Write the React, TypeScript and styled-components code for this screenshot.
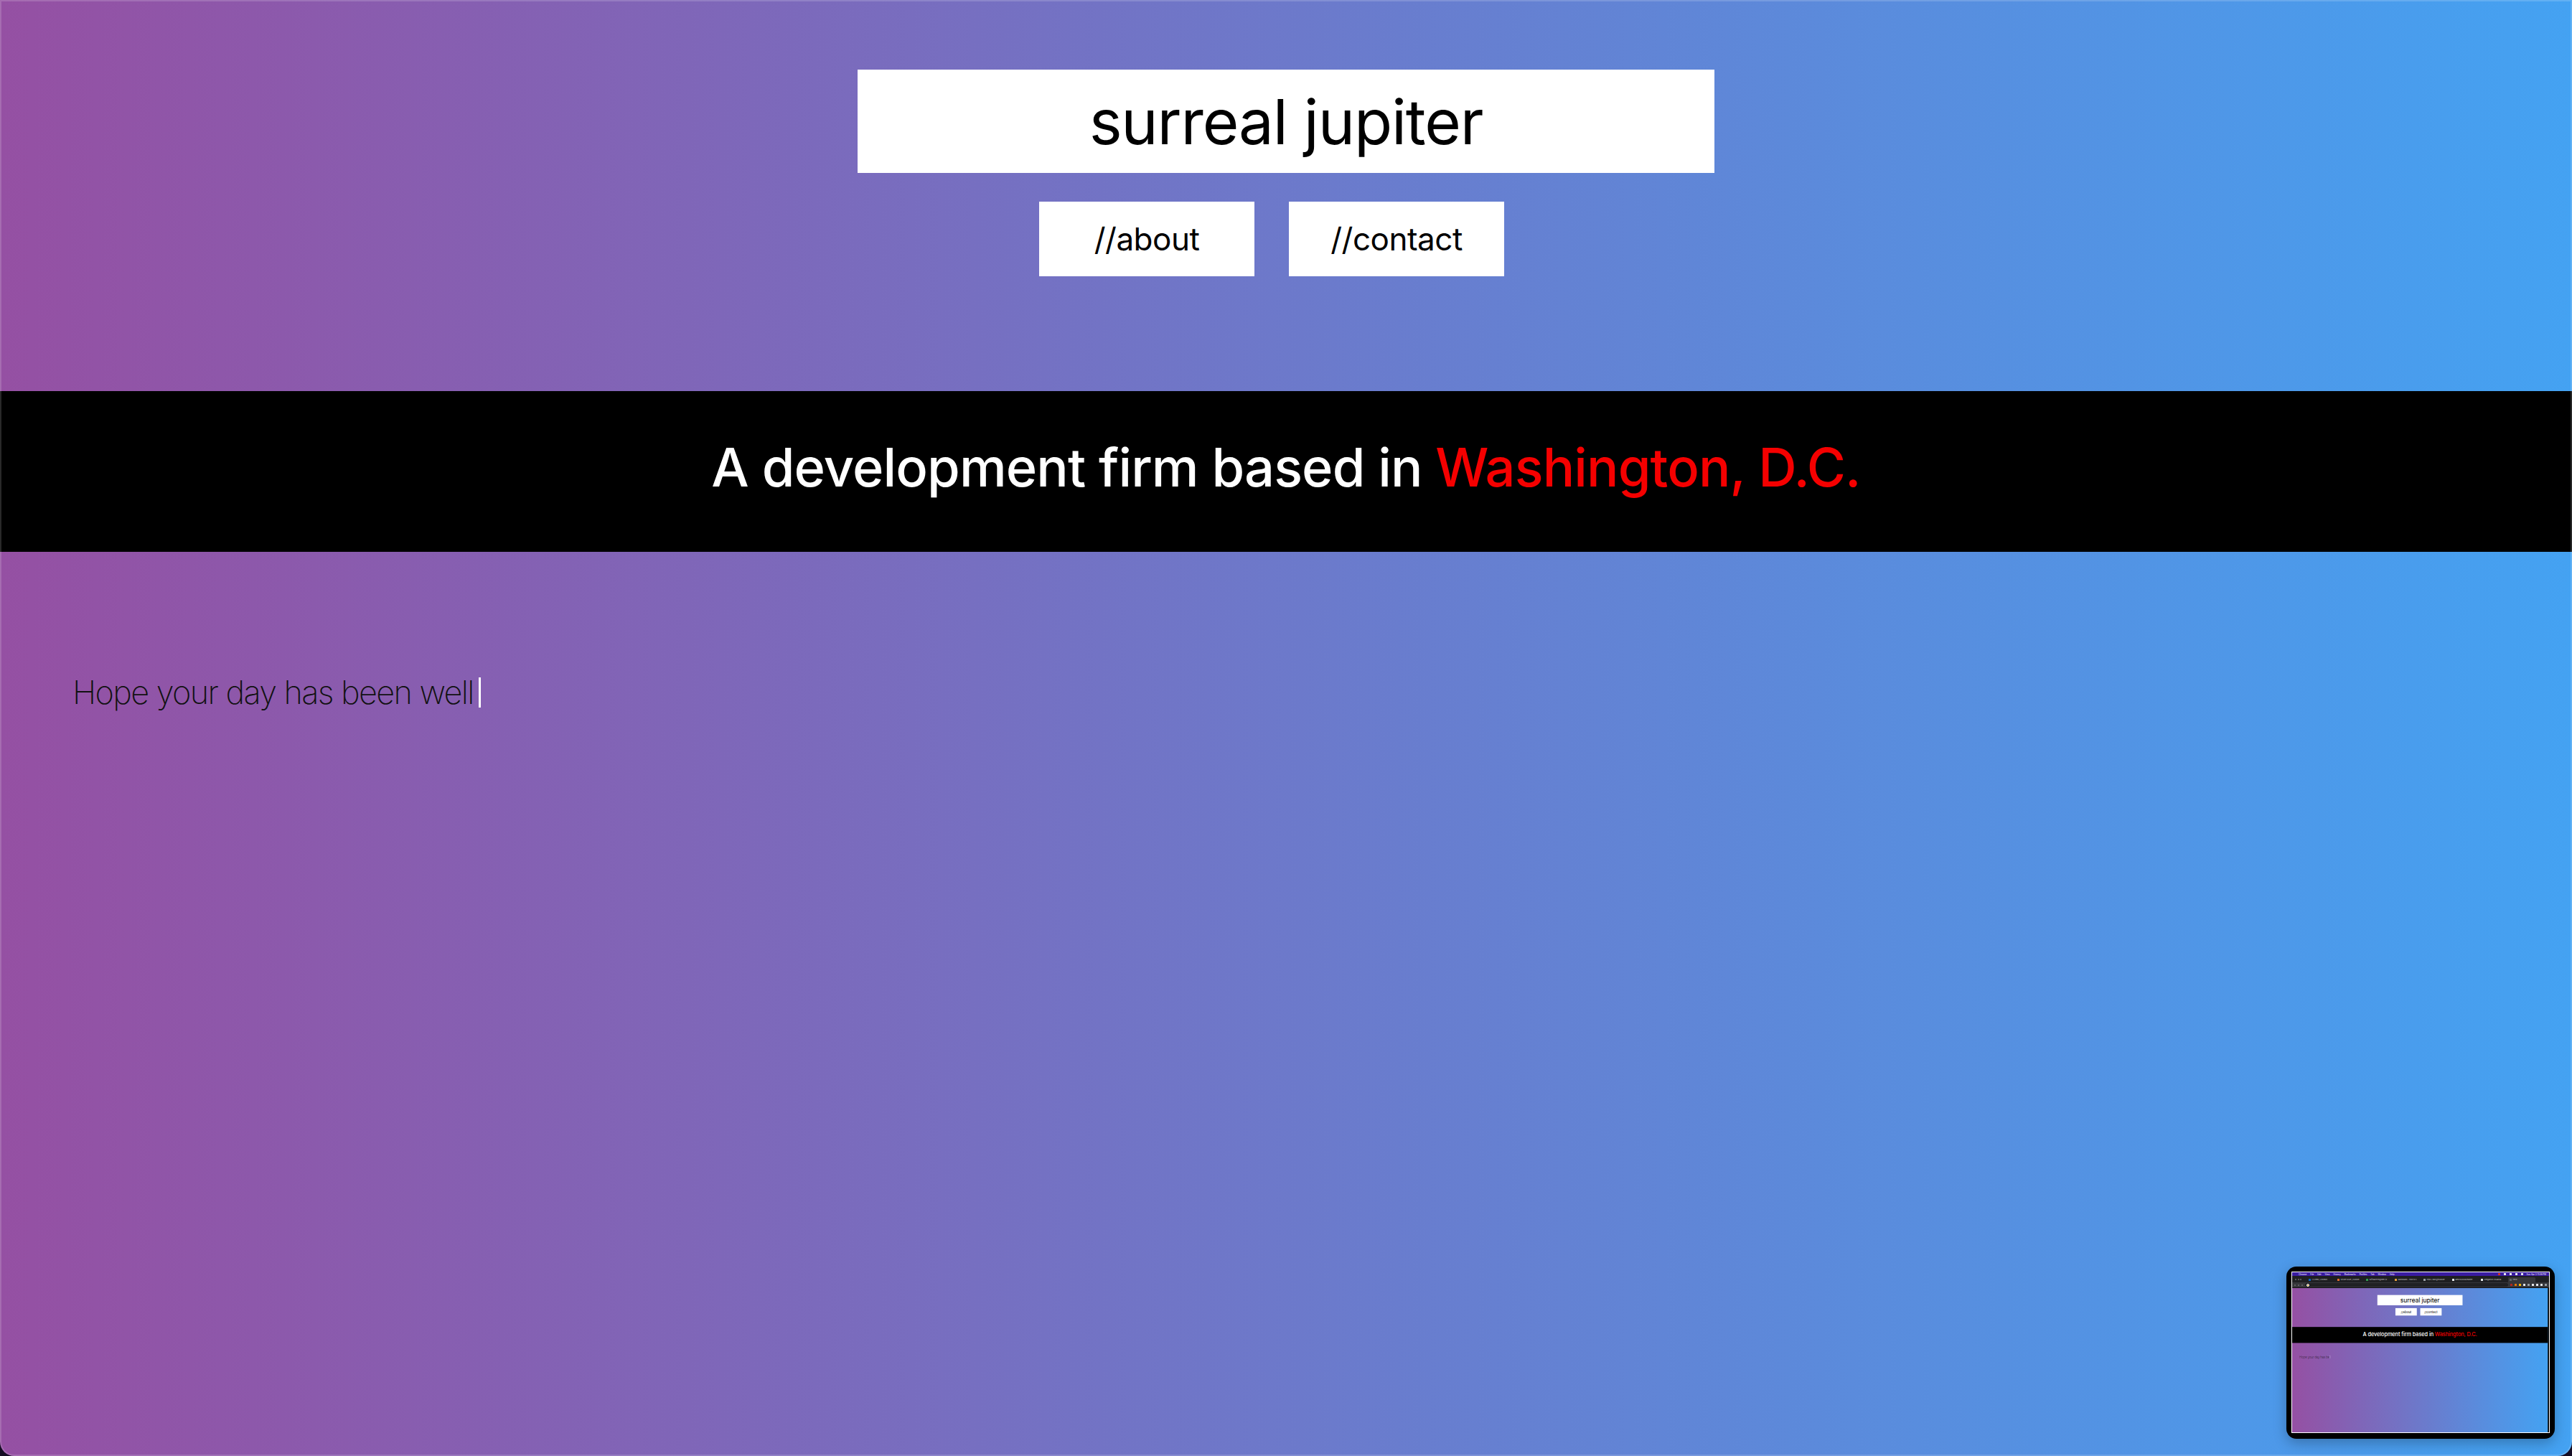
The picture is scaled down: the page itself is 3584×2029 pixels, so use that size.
import React from 'react';
import styled, { createGlobalStyle } from 'styled-components';

const Global = createGlobalStyle`
  html, body { margin: 0; padding: 0; background: #150d24; }
  body { font-family: Inter, "Noto Sans", sans-serif; }
  #root { width: 3584px; height: 2029px; }
`;

const Window = styled.div`
  position: relative;
  width: 3584px;
  height: 2029px;
  border-radius: 0 0 20px 20px;
  overflow: hidden;
  &::after {
    content: '';
    position: absolute;
    inset: 0;
    border-radius: 0 0 20px 20px;
    box-shadow: inset 0 0 0 2px rgba(255, 255, 255, 0.16);
    pointer-events: none;
  }
`;

const Page = styled.main`
  width: 3584px;
  height: 2040px;
  background: linear-gradient(to right, #9550a3, #44a2f2);
  display: flex;
  flex-direction: column;
  font-family: Inter, "Noto Sans", sans-serif;
`;

const Header = styled.header`
  height: 545px;
  box-sizing: border-box;
  padding-top: 97px;
  display: flex;
  flex-direction: column;
  align-items: center;
  gap: 40px;
`;

const TitleBox = styled.h1`
  margin: 0;
  width: 1194px;
  height: 144px;
  background: #fff;
  display: flex;
  align-items: center;
  justify-content: center;
  font-size: 87px;
  font-weight: 400;
  letter-spacing: -1.2px;
  color: #000;
`;

const Nav = styled.nav`
  display: flex;
  gap: 48px;
  padding-right: 40px;
`;

const NavButton = styled.a`
  width: 300px;
  height: 104px;
  background: #fff;
  display: flex;
  align-items: center;
  justify-content: center;
  font-size: 44px;
  font-weight: 400;
  letter-spacing: -0.5px;
  color: #000;
  text-decoration: none;
`;

const Band = styled.section`
  height: 224px;
  background: #000;
  display: flex;
  align-items: center;
  justify-content: center;
  padding-bottom: 12px;
  box-sizing: border-box;
  font-size: 74px;
  font-weight: 500;
  letter-spacing: -0.9px;
  color: #fff;
`;

const Accent = styled.span`
  color: #f50000;
  margin-left: 0.25em;
`;

const Greeting = styled.p`
  margin: 168px 0 0 101px;
  display: flex;
  align-items: center;
  font-size: 45px;
  font-weight: 200;
  letter-spacing: -1.6px;
  color: #111;
`;

const Caret = styled.span`
  display: inline-block;
  width: 3px;
  height: 42px;
  margin-left: 7px;
  background: #fff;
`;

/* ---------- screenshot thumbnail overlay ---------- */

const Thumb = styled.div`
  position: absolute;
  right: 24px;
  bottom: 24px;
  width: 374px;
  height: 240px;
  box-sizing: border-box;
  padding: 7px 7px 8px 7px;
  background: #000;
  border-radius: 14px;
  box-shadow: 0 6px 18px rgba(0, 0, 0, 0.25);
`;

const ThumbScreen = styled.div`
  width: 100%;
  height: 100%;
  box-sizing: border-box;
  border: 1px solid #fff;
  display: flex;
  flex-direction: column;
  overflow: hidden;
`;

const MenuBar = styled.div`
  height: 5px;
  background: #3a1ca2;
  display: flex;
  align-items: center;
  gap: 5px;
  padding: 0 4px;
  font-size: 3px;
  color: #fff;
  font-family: Inter, sans-serif;
`;

const MenuSpacer = styled.div`
  flex: 1;
`;

const Dot = styled.span<{ $c: string }>`
  width: 3px;
  height: 3px;
  background: ${(p) => p.$c};
  border-radius: 0.5px;
  display: inline-block;
`;

const TabBar = styled.div`
  height: 9px;
  background: #1e1f22;
  display: flex;
  align-items: center;
  gap: 2px;
  padding: 0 4px;
`;

const Lights = styled.div`
  display: flex;
  gap: 1.5px;
  margin-right: 6px;
`;

const Light = styled.span`
  width: 2px;
  height: 2px;
  border-radius: 50%;
  background: #6b6b6f;
`;

const Tab = styled.div<{ $active?: boolean }>`
  width: 38px;
  height: 7px;
  margin-top: 2px;
  background: ${(p) => (p.$active ? '#35363a' : 'transparent')};
  border-radius: 1.5px 1.5px 0 0;
  display: flex;
  align-items: center;
  gap: 1.5px;
  padding: 0 2px;
  box-sizing: border-box;
  font-size: 2.5px;
  color: #c9c9cc;
  white-space: nowrap;
  overflow: hidden;
  font-family: Inter, sans-serif;
`;

const Favicon = styled.span<{ $c: string }>`
  flex: none;
  width: 3px;
  height: 3px;
  border-radius: 0.5px;
  background: ${(p) => p.$c};
`;

const AddressBar = styled.div`
  height: 7px;
  background: #35363a;
  display: flex;
  align-items: center;
  gap: 3px;
  padding: 0 3px;
  border-bottom: 0.5px solid #111;
`;

const Omni = styled.div`
  flex: 1;
  height: 4.5px;
  background: #202124;
  border-radius: 3px;
  display: flex;
  align-items: center;
  padding: 0 2px;
`;

const ChromeLogo = styled.span`
  width: 4px;
  height: 4px;
  border-radius: 50%;
  background: conic-gradient(#ea4335 0 33%, #fbbc05 0 66%, #34a853 0);
  border: 0.5px solid #fff;
  box-sizing: border-box;
`;

const MiniViewport = styled.div`
  flex: 1;
  position: relative;
  overflow: hidden;
`;

const MiniScale = styled.div`
  width: 3584px;
  height: 2040px;
  transform: scale(0.0994);
  transform-origin: 0 0;
`;

function PageContent({ hope }: { hope: string }) {
  return (
    <Page>
      <Header>
        <TitleBox>surreal jupiter</TitleBox>
        <Nav>
          <NavButton href="#about">//about</NavButton>
          <NavButton href="#contact">//contact</NavButton>
        </Nav>
      </Header>
      <Band>
        A development firm based in<Accent>Washington, D.C.</Accent>
      </Band>
      <Greeting>
        {hope}
        <Caret />
      </Greeting>
    </Page>
  );
}

const tabs: { t: string; c: string; active?: boolean }[] = [
  { t: '(1) Feed | LinkedIn', c: '#0a66c2' },
  { t: 'Sticker Mule | Custom', c: '#e86a2c' },
  { t: 'Software engineer jo', c: '#2e9e4f' },
  { t: 'Dashboard - How to s', c: '#e8a23a' },
  { t: 'https://raw.githubuse', c: '#9aa0a6' },
  { t: 'alexcoll/blob/master', c: '#e8eaed' },
  { t: 'Integration visualiza', c: '#e8eaed' },
  { t: 'Hello', c: '#5f6368', active: true },
];

const menu = ['Chrome', 'File', 'Edit', 'View', 'History', 'Bookmarks', 'Profiles', 'Tab', 'Window', 'Help'];
const ext = ['#b3261e', '#e37400', '#fbbc04', '#e8eaed', '#9aa0a6', '#e8eaed', '#e8eaed', '#e8eaed', '#9aa0a6'];

export default function App() {
  return (
    <>
      <Global />
      <Window>
        <PageContent hope="Hope your day has been well" />
        <Thumb>
          <ThumbScreen>
            <MenuBar>
              <span></span>
              {menu.map((m) => (
                <span key={m}>{m}</span>
              ))}
              <MenuSpacer />
              <Dot $c="#d93025" />
              <Dot $c="#e8eaed" />
              <Dot $c="#e8eaed" />
              <Dot $c="#e8eaed" />
              <Dot $c="#e8eaed" />
              <span>Sun Apr 3 11:06 PM</span>
            </MenuBar>
            <TabBar>
              <Lights>
                <Light />
                <Light />
                <Light />
              </Lights>
              {tabs.map((tb) => (
                <Tab key={tb.t} $active={tb.active}>
                  <Favicon $c={tb.c} />
                  {tb.t}
                </Tab>
              ))}
            </TabBar>
            <AddressBar>
              <Light />
              <Light />
              <Light />
              <Omni>
                <ChromeLogo />
              </Omni>
              {ext.map((c, i) => (
                <Dot key={i} $c={c} />
              ))}
            </AddressBar>
            <MiniViewport>
              <MiniScale>
                <PageContent hope="Hope your day has be" />
              </MiniScale>
            </MiniViewport>
          </ThumbScreen>
        </Thumb>
      </Window>
    </>
  );
}
